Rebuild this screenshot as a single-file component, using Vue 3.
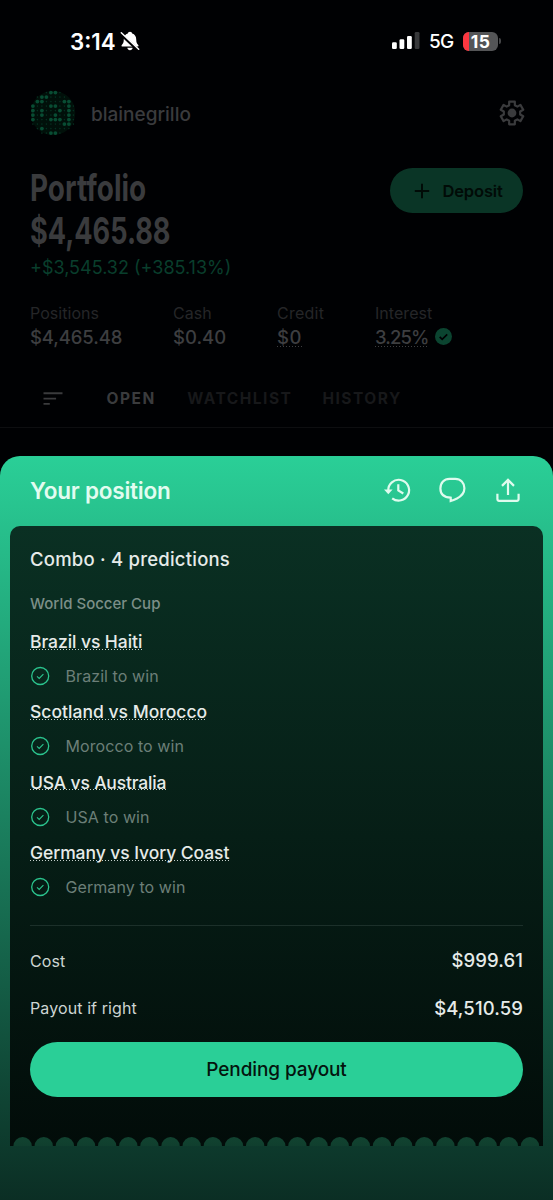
<script setup>
const stats = [
  { label: 'Positions', value: '$4,465.48', cls: 'w1' },
  { label: 'Cash', value: '$0.40', cls: 'w2' },
  { label: 'Credit', value: '$0', cls: 'w3', dotted: true },
  { label: 'Interest', value: '3.25%', cls: 'w4', dotted: true, check: true },
]

const legs = [
  { match: 'Brazil vs Haiti', pick: 'Brazil to win', cls: '' },
  { match: 'Scotland vs Morocco', pick: 'Morocco to win', cls: 'loose' },
  { match: 'USA vs Australia', pick: 'USA to win', cls: 'snug' },
  { match: 'Germany vs Ivory Coast', pick: 'Germany to win', cls: '' },
]

// Avatar dot pattern: 2 = bright, 1 = dim, 0 = empty
const pattern = [
  '0001221000',
  '0122111100',
  '0221111220',
  '2111221121',
  '2121112121',
  '2121121121',
  '2111222121',
  '1111111221',
  '0121111110',
  '0011221000',
]
const dots = pattern.flatMap((row, y) =>
  [...row].map((v, x) => ({ x: 2.9 + x * 4.5, y: 2.6 + y * 4.5, v: +v })).filter((d) => d.v),
)

const pt = (deg, r) => {
  const a = ((deg - 90) * Math.PI) / 180
  return `${(13 + r * Math.cos(a)).toFixed(2)} ${(13 + r * Math.sin(a)).toFixed(2)}`
}
const gear =
  'M' +
  [0, 60, 120, 180, 240, 300]
    .flatMap((t) => [pt(t - 20, 8.3), pt(t - 14, 11.7), pt(t + 14, 11.7), pt(t + 20, 8.3)])
    .join('L') +
  'Z'

const scallops = Array.from({ length: 25 }, (_, i) => 12.6 + i * 21.14)
</script>

<template>
  <div class="screen">
    <div class="status">
      <div class="clock">
        <span>3:14</span>
        <svg width="20" height="20" viewBox="0 0 20 20">
          <path d="M10 .8c1.200 0 2 .8 2.200 1.700 2.600.8 4 3 4 5.700 0 3.600.9 4.600 2 5.700.6.600.3 1.700-.7 1.700H2.500c-1 0-1.300-1.100-.7-1.700 1.100-1.100 2-2.100 2-5.700 0-2.700 1.400-4.900 4-5.700C8 1.600 8.800.8 10 .8zM7.300 16.700h5.400c-.2 1.500-1.300 2.500-2.700 2.500s-2.500-1-2.700-2.500z" fill="#fff" />
          <path d="M.6 2.800l17.400 16.400" stroke="#000103" stroke-width="3" />
          <path d="M1.300 1.700l17.400 16.600" stroke="#fff" stroke-width="1.500" stroke-linecap="round" />
        </svg>
      </div>
      <div class="signal">
        <svg width="28" height="18" viewBox="0 0 28 18">
          <rect x="0" y="10.300" width="4.800" height="6.700" rx="1.300" fill="#fff" />
          <rect x="7.500" y="7.300" width="4.800" height="9.700" rx="1.300" fill="#fff" />
          <rect x="15" y="4" width="4.800" height="13" rx="1.300" fill="#fff" />
          <rect x="22.700" y="0" width="4.800" height="17" rx="1.300" fill="#37383a" />
        </svg>
        <span class="net">5G</span>
        <span class="battery"><span class="level"></span><span class="pct">15</span></span>
        <span class="nub"></span>
      </div>
    </div>

    <header class="profile">
      <svg class="avatar" width="46" height="46" viewBox="0 0 46 46">
        <circle cx="23" cy="23" r="22.300" fill="#01100a" />
        <circle v-for="(d, i) in dots" :key="i" :cx="d.x" :cy="d.y" :r="d.v === 2 ? 1.9 : 0.8" :fill="d.v === 2 ? '#084c33' : '#053020'" />
      </svg>
      <span class="name">blainegrillo</span>
      <svg class="gear" width="26" height="26" viewBox="0 0 26 26">
        <path :d="gear" fill="none" stroke="#3a3b3d" stroke-width="2.200" stroke-linejoin="round" />
        <circle cx="13" cy="13" r="4.400" fill="#3a3b3d" />
      </svg>
    </header>

    <section class="summary">
      <div>
        <h1><span class="narrow">Portfolio</span></h1>
        <div class="total"><span class="narrow tighter">$4,465.88</span></div>
        <div class="gain">+$3,545.32 (+385.13%)</div>
      </div>
      <button class="deposit">
        <svg width="16" height="16" viewBox="0 0 16 16"><path d="M8 .8v14.400M.8 8h14.400" stroke="#010b07" stroke-width="2" /></svg>
        <span>Deposit</span>
      </button>
    </section>

    <section class="stats">
      <div v-for="s in stats" :key="s.label" :class="['stat', s.cls]">
        <div class="label">{{ s.label }}</div>
        <div class="value">
          <span :class="{ dotted: s.dotted }">{{ s.value }}</span>
          <svg v-if="s.check" width="17" height="17" viewBox="0 0 17 17">
            <circle cx="8.500" cy="8.500" r="8.500" fill="#0b4430" />
            <path d="M4.700 8.800l2.500 2.500 5-5" fill="none" stroke="#000103" stroke-width="1.700" />
          </svg>
        </div>
      </div>
    </section>

    <nav class="tabs">
      <svg width="20" height="14" viewBox="0 0 20 14">
        <path d="M.5 2.300h19M.5 7.600h12.600M.5 12.900h6.300" stroke="#3a3b3d" stroke-width="1.900" />
      </svg>
      <span class="tab on">OPEN</span>
      <span class="tab second">WATCHLIST</span>
      <span class="tab">HISTORY</span>
    </nav>

    <section class="sheet">
      <div class="sheet-head">
        <h2>Your position</h2>
        <svg class="i-history" width="28" height="26" viewBox="0 0 28 26" fill="none" stroke="#dffbee" stroke-width="2.200">
          <path d="M4.300 13.700A10.400 10.400 0 1 1 8.200 21.300" />
          <path d="M0 12.600h8.600l-4.300 4.700z" fill="#dffbee" stroke="none" />
          <path d="M14.300 7.200v6.300l5 3" />
        </svg>
        <svg class="i-chat" width="28" height="26" viewBox="0 0 28 26" fill="none" stroke="#dffbee" stroke-width="2.200" stroke-linejoin="miter">
          <path d="M12.700 24v-3.300C6 20.400 2.400 16.800 2.400 11.500 2.400 5.600 6.200 1.800 11.500 1.800h5.800c5.300 0 9.100 3.800 9.100 9.500 0 5.300-3.700 8.300-7.400 10.100-2.200 1.100-4.300 2-6.300 2.600z" />
        </svg>
        <svg class="i-share" width="24" height="26" viewBox="0 0 24 26" fill="none" stroke="#dffbee" stroke-width="2.200">
          <path d="M1.400 16.800v5.300q0 1.700 1.700 1.700h17.800q1.700 0 1.700-1.700v-5.300M12 18.100V3.300M6 8.900l6-6 6 6" />
        </svg>
      </div>

      <div class="card">
        <h3>Combo · 4 predictions</h3>
        <div class="league">World Soccer Cup</div>
        <div v-for="l in legs" :key="l.match" class="leg">
          <div class="match"><span :class="l.cls">{{ l.match }}</span></div>
          <div class="pick">
            <svg width="20" height="20" viewBox="0 0 20 20" fill="none" stroke="#2bc48e">
              <circle cx="10.200" cy="10" r="8.500" stroke-width="1.300" />
              <path d="M7 10.400l2.200 2 4.200-4.300" stroke-width="1.100" />
            </svg>
            <span>{{ l.pick }}</span>
          </div>
        </div>
        <div class="rule"></div>
        <div class="line"><span>Cost</span><b>$999.61</b></div>
        <div class="line"><span>Payout if right</span><b>$4,510.59</b></div>
        <button class="payout">Pending payout</button>
        <svg class="scallops" width="533" height="9" viewBox="0 0 533 9">
          <defs>
            <linearGradient id="edge" x1="0" y1="-9" x2="0" y2="9" gradientUnits="userSpaceOnUse">
              <stop offset="0" stop-color="#124632" />
              <stop offset="1" stop-color="#103f2e" />
            </linearGradient>
          </defs>
          <circle v-for="x in scallops" :key="x" :cx="x" cy="9.300" r="9.200" fill="url(#edge)" />
        </svg>
      </div>
    </section>
  </div>
</template>

<style>
html,
body {
  background: #000103;
}
</style>

<style scoped>
.screen {
  width: 553px;
  height: 1200px;
  overflow: hidden;
  display: flex;
  flex-direction: column;
  background: #000103;
  font-family: Inter, 'Liberation Sans', sans-serif;
  white-space: nowrap;
}
h1,
h2,
h3 {
  margin: 0;
}
button {
  border: 0;
  padding: 0;
  font-family: inherit;
}
svg {
  display: block;
  flex: none;
}
.status {
  height: 82px;
  box-sizing: border-box;
  padding: 0 52px 0 70px;
  display: flex;
  justify-content: space-between;
  align-items: center;
  color: #fff;
}
.clock {
  display: flex;
  align-items: center;
  gap: 4px;
  font-size: 22.3px;
  font-weight: 600;
}
.signal {
  display: flex;
  align-items: center;
}
.net {
  margin-left: 9px;
  width: 25px;
  font-size: 19px;
  font-weight: 500;
  letter-spacing: -0.8px;
}
.battery {
  display: flex;
  align-items: center;
  justify-content: center;
  width: 35px;
  height: 19px;
  margin-left: 9px;
  border-radius: 6px;
  background: #545557;
  overflow: hidden;
  position: relative;
}
.level {
  position: absolute;
  left: 0;
  top: 0;
  width: 6px;
  height: 19px;
  background: #fb3740;
}
.pct {
  font-size: 17.5px;
  font-weight: 700;
  letter-spacing: 0.3px;
  line-height: 19px;
}
.nub {
  width: 2px;
  height: 6px;
  margin-left: 1px;
  border-radius: 0 3px 3px 0;
  background: #454648;
}
.profile {
  height: 62px;
  padding: 0 28px 0 30px;
  display: flex;
  align-items: center;
}
.name {
  margin: 3px auto 0 15px;
  font-size: 19px;
  font-weight: 500;
  line-height: 24px;
  color: #3a3b3d;
}
.gear {
  margin-top: -1px;
}
.summary {
  height: 159px;
  box-sizing: border-box;
  padding: 22px 30px 0;
  display: flex;
  justify-content: space-between;
  color: #3a3b3d;
}
h1,
.total {
  font-size: 37px;
  font-weight: 700;
  line-height: 43px;
  height: 43px;
}
.narrow {
  display: inline-block;
  transform: scaleX(0.755);
  transform-origin: 0 50%;
}
.tighter {
  transform: scaleX(0.733);
}
.gain {
  margin-top: 5px;
  font-size: 18px;
  line-height: 22px;
  color: #093e2c;
}
.deposit {
  width: 133px;
  height: 45px;
  margin-top: 2px;
  border-radius: 23px;
  background: #0a3526;
  color: #010b07;
  display: flex;
  align-items: center;
  padding-left: 24px;
  gap: 12.5px;
  font-size: 16.5px;
  font-weight: 600;
  letter-spacing: -0.15px;
  box-sizing: border-box;
}
.stats {
  height: 66px;
  padding-left: 30px;
  display: flex;
}
.w1 {
  width: 143px;
}
.w2 {
  width: 104px;
}
.w3 {
  width: 98px;
}
.w3 .label {
  letter-spacing: 0.25px;
}
.w3 .value {
  letter-spacing: 0.5px;
}
.w4 .value {
  letter-spacing: -0.9px;
}
.label {
  margin-top: -2px;
  font-size: 16px;
  line-height: 24px;
  letter-spacing: 0.05px;
  color: #252628;
}
.value {
  display: flex;
  align-items: center;
  gap: 6.5px;
  font-size: 18.5px;
  line-height: 24px;
  font-weight: 500;
  color: #3d3e40;
}
.w1 .value {
  letter-spacing: -0.1px;
}
.dotted {
  height: 22px;
  line-height: 24px;
  background: linear-gradient(90deg, #3d3e40 50%, transparent 50%) 0 100% / 3px 1.5px repeat-x;
}
.tabs {
  height: 59px;
  margin-bottom: 28px;
  box-sizing: border-box;
  border-bottom: 1px solid #0d0e10;
  padding-left: 43px;
  display: flex;
  align-items: center;
}
.tab {
  font-size: 15.5px;
  font-weight: 700;
  letter-spacing: 1.5px;
  color: #17181a;
}
.on {
  margin: 0 31.5px 0 43.5px;
  color: #3a3b3d;
}
.second {
  margin-right: 30px;
}
.sheet {
  flex: 1;
  border-radius: 20px 20px 0 0;
  background: linear-gradient(#2acf97, #0b2e24);
}
.sheet-head {
  height: 70px;
  box-sizing: border-box;
  padding: 0 33.5px 2px 30px;
  display: flex;
  align-items: center;
}
h2 {
  flex: 1;
  font-size: 22.5px;
  font-weight: 600;
  letter-spacing: -0.2px;
  color: #e2fcf0;
}
.i-history {
  margin-left: -1px;
}
.i-chat {
  margin-left: 26px;
}
.i-share {
  margin-left: 29.5px;
}
.card {
  height: 620px;
  margin: 0 10px;
  box-sizing: border-box;
  padding: 22px 20px 0;
  position: relative;
  border-radius: 10px 10px 0 0;
  background: linear-gradient(#0a3023, #020c09);
}
h3 {
  font-size: 18.5px;
  font-weight: 500;
  line-height: 23px;
  letter-spacing: 0.22px;
  color: #e6ebe9;
}
.league {
  margin: 23px 0 18px;
  font-size: 15px;
  font-weight: 500;
  line-height: 20px;
  color: #7c8f88;
}
.leg {
  height: 70.3px;
}
.match {
  height: 20px;
  line-height: 20px;
  font-size: 17.5px;
  font-weight: 500;
  letter-spacing: -0.07px;
  color: #e6ebe9;
}
.match span {
  display: inline-block;
  height: 18px;
  background: linear-gradient(90deg, #c5cfcb 50%, transparent 50%) 0 100% / 3px 1.3px repeat-x;
}
.match .snug {
  letter-spacing: -0.18px;
}
.match .loose {
  letter-spacing: 0.02px;
}
.pick {
  margin: 13.5px 0 0;
  height: 21px;
  display: flex;
  align-items: center;
  gap: 15.5px;
  font-size: 16px;
  letter-spacing: 0.08px;
  color: #6c7f78;
}
.rule {
  height: 1.4px;
  margin: 11.4px 0 23.3px;
  background: #1c302a;
}
.line {
  display: flex;
  justify-content: space-between;
  align-items: center;
  height: 22px;
  margin-bottom: 25.5px;
  font-size: 16px;
  letter-spacing: 0.1px;
  color: #cdd5d2;
}
.line span {
  padding-top: 1px;
}
.line b {
  font-size: 18.5px;
  font-weight: 500;
  letter-spacing: 0.1px;
  color: #e6ebe9;
}
.payout {
  width: 493px;
  height: 55px;
  margin-top: -2.5px;
  border-radius: 28px;
  background: #2acf97;
  color: #04140e;
  font-size: 19px;
  font-weight: 500;
  letter-spacing: -0.1px;
}
.scallops {
  position: absolute;
  left: 0;
  bottom: 0;
}
</style>
